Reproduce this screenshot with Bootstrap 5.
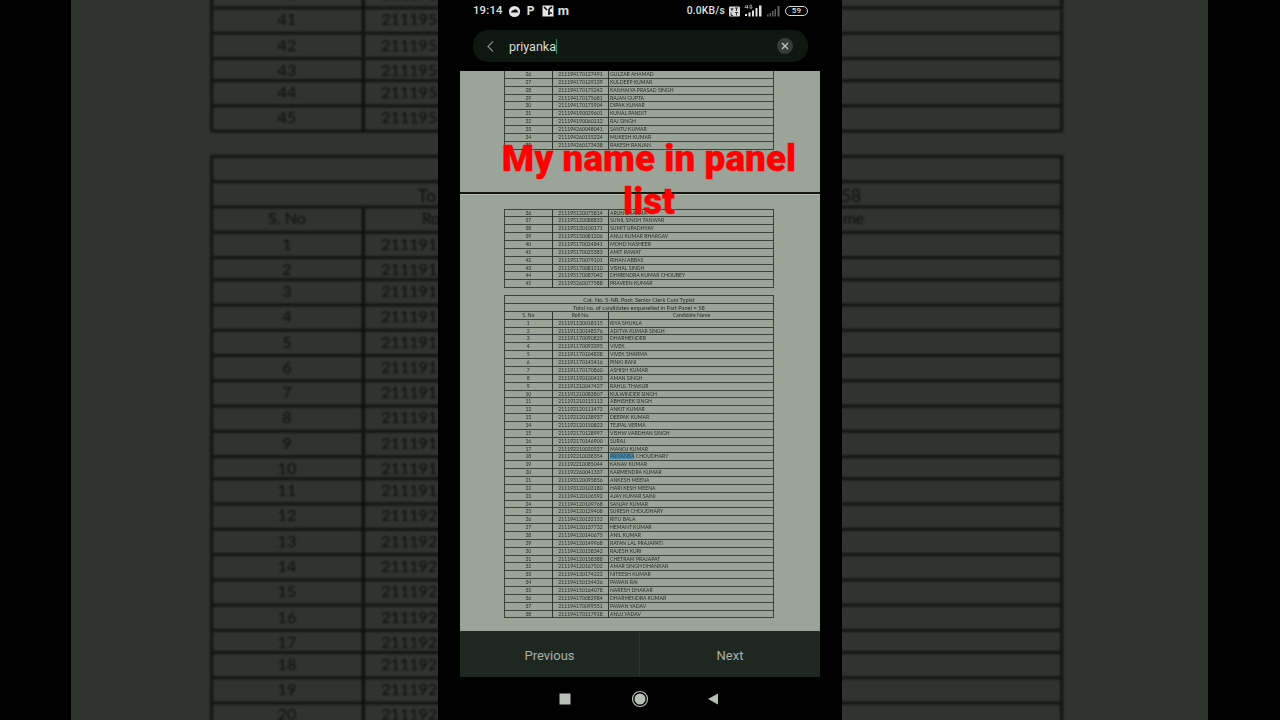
<!DOCTYPE html>
<html lang="en">
<head>
<meta charset="utf-8">
<title>Panel list</title>
<link href="https://cdn.jsdelivr.net/npm/bootstrap@5.3.0/dist/css/bootstrap.min.css" rel="stylesheet">
<style>
html,body{height:720px;overflow:hidden;background:#000;font-family:Roboto,"Liberation Sans",sans-serif}
.stage{position:relative;width:1280px;height:720px;overflow:hidden;background:#000}
.backdrop{position:absolute;left:71px;top:0;width:1137px;height:720px;overflow:hidden;background:#2f312e}
.doc.backdrop-doc{position:absolute;left:0;top:-553px;width:360px;transform-origin:0 0;transform:scale(3.16);filter:brightness(.31) blur(.36px)}
.phone{position:relative;width:404px;height:720px;background:#000;color:#ddd}
.status{height:22px;padding:0 34px 0 35px;font-size:11.300px;font-weight:500;color:#dfe2de;letter-spacing:.2px}
.status svg{display:block}
.stat-p{font-weight:700;font-size:12px;width:9px}
.stat-m{font-weight:700;font-size:13px}
.speed{font-size:10.300px}
.gap-jio{margin-left:5px}
.gap-p{margin-left:6px}
.gap-box{margin-left:6px}
.gap-m{margin-left:4px}
.batt{width:23px;height:10px;border:1px solid #d8dbd7;border-radius:5px;font-size:8px;line-height:8px}
.search{margin:8px 34px 0 35px;height:32px;border-radius:15px;background:#0f1711;padding:0 15px 0 12px;font-size:12.5px;color:#d8dcd6}
.typed{margin-left:13px;border-right:1.5px solid #1c8f6e;line-height:15px}
.clear-x{width:16px;height:16px;border-radius:50%;background:#353d37}
.sheet{position:relative;margin:9px 22px 0;width:360px;height:560px;background:#9aa498;overflow:hidden}
.doc{width:360px;height:560px;background:#9aa498;color:#262d27;font-family:Lato,"Liberation Sans",sans-serif;font-size:5.100px;filter:blur(.34px)}
.doc-grid{margin-left:43.7px;width:270.4px;border:1px solid #3a433b;border-bottom-width:0}
.doc-line{display:grid;grid-template-columns:48.3px 56px 1fr;height:7.86px;line-height:7.6px;border-bottom:1px solid #3a433b;white-space:nowrap}
.doc-line>span:nth-child(1),.doc-line>span:nth-child(2){text-align:center;border-right:1px solid #2c342d}
.doc-line>span:nth-child(3){padding-left:1px}
.doc-head{height:7.86px;line-height:7.6px;text-align:center;border-bottom:1px solid #3a433b;font-size:5.7px}
.doc-line.labels>span:nth-child(3){text-align:center}
.frag-a{border-top-width:0}
.rule{margin-top:42px;height:2.500px;background:#14180f;box-shadow:0 1px 0 #b4bcb0}
.frag-b{margin-top:14.5px}
.frag-c{margin-top:7px}
.hit{background:#4a86a8;color:#1f4a63}
.caption{position:absolute;left:29px;top:66px;width:320px;margin:0;color:#f00;font:900 37px/43px Roboto,"Liberation Sans",sans-serif;text-align:center;-webkit-text-stroke:.3px #f00}
.pager{margin:0 22px;height:46px;background:#1f2820}
.pager .btn{flex:1 1 50%;border:0;border-radius:0;color:#a9b0a8;font-size:13px;padding:3px 0 0;height:46px;--bs-btn-hover-color:#a9b0a8}
.pager .btn:first-child{border-right:1px solid #2a332b}
.softkeys{height:43px}
.softkeys svg{display:block}
/* backdrop copy: only what shows beside the phone */
.side-roll{padding-left:5.2px;text-align:left!important}
.side-split{display:flex;justify-content:space-between;padding:0 63px 0 65px;font-size:5.6px}
.side-end{padding-right:62px;text-align:right!important}
.side-start{padding-left:18px;text-align:left!important}
</style>
</head>
<body>
<div class="stage d-flex justify-content-center">
  <div class="backdrop" id="backdrop"></div>
  <div class="phone d-flex flex-column">
    <div class="status d-flex align-items-center justify-content-between">
      <div class="d-flex align-items-center">
        <span>19:14</span>
        <svg class="gap-jio" width="13" height="13" viewBox="0 0 13 13" aria-hidden="true"><circle cx="6.5" cy="6.5" r="5.6" fill="#e4e6e3"/><path d="M2.8 7.6c.6-1.900 1.700-2.700 3-2.700 1.100-1.200 3.800-.8 4.300 2.700z" fill="#141414"/></svg>
        <span class="stat-p gap-p">P</span>
        <svg class="gap-box" width="12" height="12" viewBox="0 0 12 12" aria-hidden="true"><rect x=".5" y=".5" width="11" height="11" fill="#e4e6e3"/><path d="M2 2l3 3M6 8h4M7 4v6M10 2L7 4" stroke="#141414" stroke-width="1.700" fill="none"/></svg>
        <span class="stat-m gap-m">m</span>
      </div>
      <div class="d-flex align-items-center">
        <span class="speed">0.0KB/s</span>
        <svg class="ms-1" width="11" height="11" viewBox="0 0 11 11" aria-hidden="true"><rect x="0" y=".5" width="11" height="10" rx="1" fill="#d6d9d5"/><path d="M2 2l1 2.500L4 2M6 2h3M7.500 2v3M2 6.500v3h2M6 6.500h3M7.500 6.500v3" stroke="#222" stroke-width=".9" fill="none"/></svg>
        <svg class="ms-1" width="19" height="14" viewBox="0 0 19 14" aria-hidden="true"><path d="M3.500 1v3.500M2.500 1L.8 3.500h3.500" stroke="#ccc" stroke-width=".7" fill="none"/><path d="M8 1.200H6v3h2V2.800H7" stroke="#ccc" stroke-width=".7" fill="none"/><g fill="#dfe2de"><rect x="1" y="10" width="2" height="2"/><rect x="4.500" y="8.500" width="2" height="4"/><rect x="8" y="6.500" width="2" height="6"/><rect x="11.500" y="4" width="2" height="8.500"/><rect x="15" y="1.500" width="2.500" height="11"/></g></svg>
        <svg class="ms-1" width="14" height="13" viewBox="0 0 14 13" aria-hidden="true"><g fill="#5f625f"><rect x="0" y="9.500" width="1.500" height="2"/><rect x="2.500" y="8" width="1.500" height="3.500"/><rect x="5" y="6" width="1.500" height="5.500"/><rect x="7.500" y="4" width="1.500" height="7.500"/><rect x="10.500" y="1" width="2" height="10.500"/></g></svg>
        <div class="batt ms-1 d-flex align-items-center justify-content-center">59</div>
      </div>
    </div>
    <div class="search d-flex align-items-center">
      <svg width="11" height="13" viewBox="0 0 11 13" aria-hidden="true"><path d="M8 1.500 3 6.500l5 5" fill="none" stroke="#7d857e" stroke-width="1.300"/></svg>
      <span class="typed">priyanka</span>
      <div class="clear-x ms-auto d-flex align-items-center justify-content-center">
        <svg width="8" height="8" viewBox="0 0 8 8" aria-hidden="true"><path d="M1 1l6 6M7 1 1 7" stroke="#c4c9c3" stroke-width="1.300"/></svg>
      </div>
    </div>
    <div class="sheet">
      <div class="doc" id="doc"></div>
      <p class="caption">My name in panel list</p>
    </div>
    <div class="pager d-flex">
      <button type="button" class="btn">Previous</button>
      <button type="button" class="btn">Next</button>
    </div>
    <div class="softkeys d-flex align-items-center justify-content-center">
      <svg width="190" height="20" viewBox="0 0 190 20" aria-hidden="true">
        <rect x="14.500" y="4.500" width="11" height="11" fill="#b9bfb8"/>
        <circle cx="95" cy="10" r="7.500" fill="none" stroke="#b9bfb8" stroke-width="1.200"/>
        <circle cx="95" cy="10" r="5.500" fill="#b9bfb8"/>
        <path d="M173 4.500v11L163 10z" fill="#b9bfb8"/>
      </svg>
    </div>
  </div>
</div>
<script src="https://cdn.jsdelivr.net/npm/bootstrap@5.3.0/dist/js/bootstrap.bundle.min.js"></script>
<script>
var a=[[26,"211194170127491","GULZAR AHAMAD"],[27,"211194170129139","KULDEEP KUMAR"],[28,"211194170175242","KANHAIYA PRASAD SINGH"],[29,"211194170175681","RAJAN GUPTA"],[30,"211194170175904","DIPAK KUMAR"],[31,"211194190029601","KUNAL PANDIT"],[32,"211194190060112","RAJ SINGH"],[33,"211194260048041","SANTU KUMAR"],[34,"211194260155224","MUKESH KUMAR"],[35,"211194260173438","RAKESH RANJAN"]];
var b=[[36,"211195120075814","ARUN SHARMA"],[37,"211195120088833","SUNIL SINGH TANWAR"],[38,"211195130100171","SUMIT UPADHYAY"],[39,"211195150081206","ANUJ KUMAR BHARGAV"],[40,"211195170024841","MOHD NASHEER"],[41,"211195170025383","AMIT RAWAT"],[42,"211195170079101","RIHAN ABBAS"],[43,"211195170081510","VISHAL SINGH"],[44,"211195170087042","DHIRENDRA KUMAR CHOUBEY"],[45,"211195260077588","PRAVEEN KUMAR"]];
var c=[[1,"211191130018115","RIYA SHUKLA"],[2,"211191130148576","ADITYA KUMAR SINGH"],[3,"211191170090823","DHARMENDER"],[4,"211191170093395","VIVEK"],[5,"211191170104838","VIVEK SHARMA"],[6,"211191170145416","PINKI RANI"],[7,"211191170170860","ASHISH KUMAR"],[8,"211191190100413","AMAN SINGH"],[9,"211191210047427","RAHUL THAKUR"],[10,"211191210083807","KULWINDER SINGH"],[11,"211191210115113","ABHISHEK SINGH"],[12,"211192120111472","ANKIT KUMAR"],[13,"211192120138937","DEEPAK KUMAR"],[14,"211192120150823","TEJPAL VERMA"],[15,"211192170128997","VISHW VARDHAN SINGH"],[16,"211192170146900","SURAJ"],[17,"211192210020527","MANOJ KUMAR"],[18,"211192210038354",'<span class="hit">PRIYANKA</span> CHOUDHARY'],[19,"211192210085044","KANAV KUMAR"],[20,"211192260041337","KARMENDRA KUMAR"],[21,"211193120095856","ANKESH MEENA"],[22,"211193120103180","HARI KESH MEENA"],[23,"211194120106592","AJAY KUMAR SAINI"],[24,"211194120109768","SANJAY KUMAR"],[25,"211194120129408","SURESH CHOUDHARY"],[26,"211194120132152","RITU BALA"],[27,"211194120137732","HEMANT KUMAR"],[28,"211194120140675","ANIL KUMAR"],[29,"211194120149968","RATAN LAL PRAJAPATI"],[30,"211194120158342","RAJESH KURI"],[31,"211194120158388","CHETRAM PRAJAPAT"],[32,"211194120167502","AMAR SINGH DHANKAR"],[33,"211194130174222","NITEESH KUMAR"],[34,"211194150154426","PAWAN RAI"],[35,"211194150164078","NARESH DHAKAR"],[36,"211194170082984","DHARMENDRA KUMAR"],[37,"211194170099551","PAWAN YADAV"],[38,"211194170117918","ANUJ YADAV"]];
function rows(l){return l.map(function(r){return '<div class="doc-line"><span>'+r[0]+'</span><span>'+r[1]+'</span><span>'+r[2]+'</span></div>'}).join('')}
function side(l){return l.map(function(r){return '<div class="doc-line"><span>'+r[0]+'</span><span class="side-roll">'+r[1].slice(0,6)+'</span><span></span></div>'}).join('')}
document.getElementById('doc').innerHTML='<div class="doc-grid frag-a">'+rows(a)+'</div><div class="rule"></div><div class="doc-grid frag-b">'+rows(b)+'</div><div class="doc-grid frag-c"><div class="doc-head">Cat. No. 5-NR, Post: Senior Clerk Cum Typist</div><div class="doc-head">Total no. of candidates empanelled in Part Panel = 58</div><div class="doc-line labels"><span>S. No</span><span>Roll No.</span><span>Candidate Name</span></div>'+rows(c)+'</div>';
var copy=document.createElement('div');copy.className='doc backdrop-doc';copy.setAttribute('aria-hidden','true');
copy.innerHTML='<div class="doc-grid frag-a">'+side(a)+'</div><div class="rule"></div><div class="doc-grid frag-b">'+side(b)+'</div><div class="doc-grid frag-c"><div class="doc-head"></div><div class="doc-head side-split"><span>To</span><span>58</span></div><div class="doc-line labels"><span>S. No</span><span class="side-start">Ro</span><span class="side-end">me</span></div>'+side(c)+'</div>';
document.getElementById('backdrop').appendChild(copy);
</script>
</body>
</html>
